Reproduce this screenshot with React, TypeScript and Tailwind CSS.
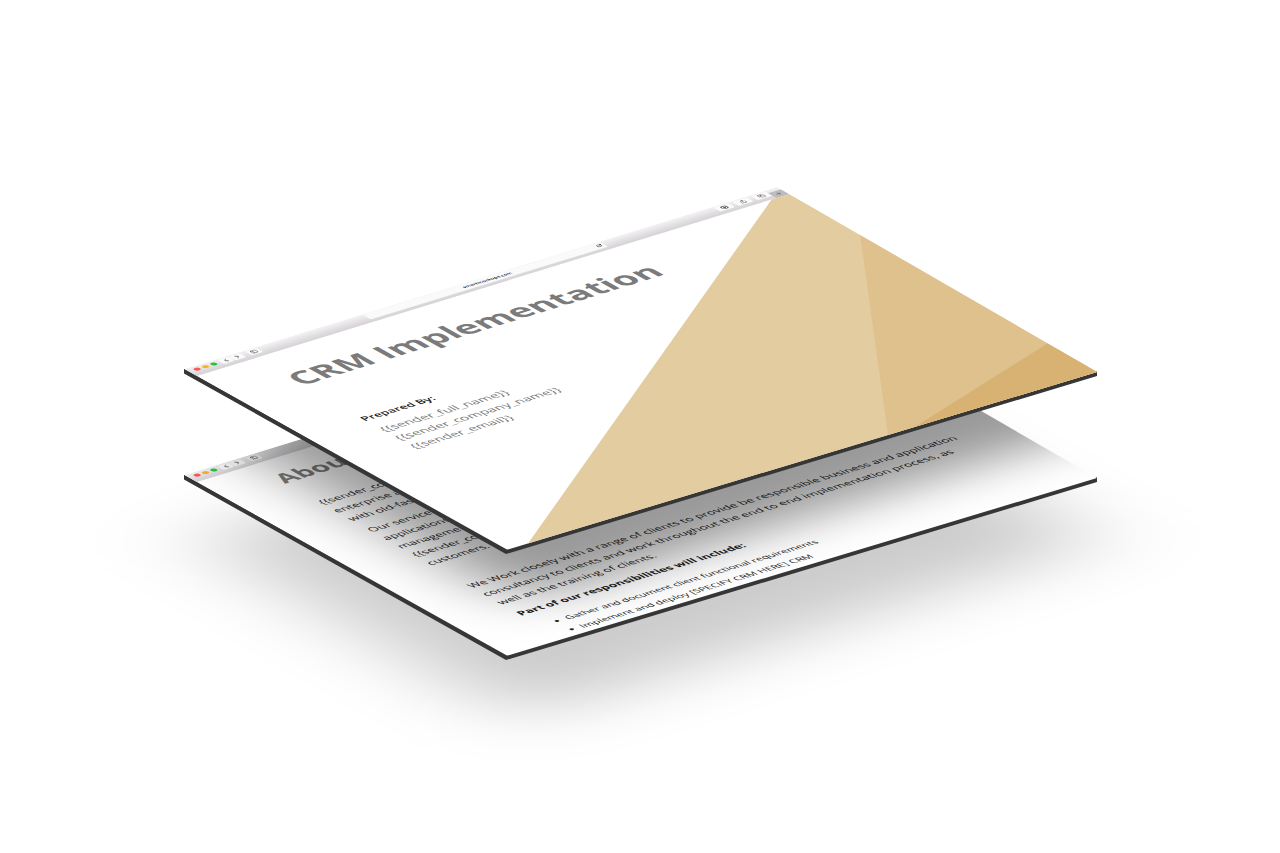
import type { ReactNode } from 'react';
import { ChevronLeft, ChevronRight, CircleArrowDown, Copy, PanelLeft, Plus, RotateCw, Share } from 'lucide-react';

const toolButton = 'flex h-5 w-6 items-center justify-center rounded-sm bg-[#fbfbfb] text-[#555]';
const wideButton = 'flex h-5 w-8 items-center justify-center rounded-sm bg-[#fbfbfb] text-[#555]';

function BrowserBar() {
  return (
    <header className="flex h-9 items-start border-b border-[#bdbabd] bg-linear-to-b from-[#f4f3f4] to-[#d6d2d7]">
      <div className="flex h-7 flex-1 items-center pl-3">
        <div className="flex gap-1.5">
          <span className="size-3 rounded-full bg-[#fc5753]" />
          <span className="size-3 rounded-full bg-[#f5b12f]" />
          <span className="size-3 rounded-full bg-[#2ac03f]" />
        </div>
        <div className="ml-2 flex gap-px">
          <button aria-label="Back" className={toolButton}><ChevronLeft size={18} /></button>
          <button aria-label="Forward" className={toolButton}><ChevronRight size={18} /></button>
        </div>
        <button aria-label="Sidebar" className={`${toolButton} ml-3`}><PanelLeft size={14} /></button>
      </div>
      <div className="mt-0.5 ml-4 flex h-6 w-[512px] items-center rounded-sm bg-[#fafafa] pl-6">
        <a href="#" className="flex-1 text-center text-[11px] font-semibold text-black">smartmockups.com</a>
        <button aria-label="Reload" className="mr-1"><RotateCw size={12} /></button>
      </div>
      <div className="flex h-7 flex-1 items-center justify-end gap-2">
        <button aria-label="Downloads" className={wideButton}><CircleArrowDown size={14} strokeWidth={4} /></button>
        <button aria-label="Share" className={wideButton}><Share size={14} /></button>
        <button aria-label="Tabs" className={wideButton}><Copy size={14} /></button>
      </div>
      <button aria-label="New tab" className="mt-3 flex h-6 w-7 items-center justify-center bg-[#bdbbbd] text-[#666]"><Plus size={14} /></button>
    </header>
  );
}

// The dark rim under the two front edges of a sheet
function SheetEdge() {
  return (
    <svg viewBox="0 0 913 190" className="absolute top-[369px] left-[184px] h-[190px] w-[913px]" aria-hidden="true">
      <path d="M0 -1 L322 179 L913 2 L913 7 L322 185 L0 4.500 Z" fill="#363636" />
    </svg>
  );
}

function Sheet({ children, shade }: { children: ReactNode; shade?: boolean }) {
  return (
    <div className="absolute top-0 left-0 h-[853px] w-[1280px] [clip-path:polygon(184px_369px,777px_187px,1097px_372px,506px_550px)]">
      <div className="relative h-[960px] w-[1280px] origin-top-left transform-[matrix(0.46328,-0.14219,0.34402,0.19231,184,369)] overflow-hidden bg-white">
        <BrowserBar />
        {children}
        {shade && <div className="absolute -top-72 -right-72 bottom-[180px] left-[150px] bg-black/40 blur-[80px]" />}
      </div>
    </div>
  );
}

function Cover() {
  return (
    <main className="relative h-[924px] pt-15 pl-[122px]">
      <svg viewBox="0 0 1280 924" className="absolute inset-0 size-full" aria-hidden="true">
        <path d="M1242 0 H1280 V924 H18 Z" fill="#e2cca0" />
        <path d="M1280 205 V924 H808 Z" fill="#dfc18d" />
        <path d="M1280 763 V924 H839 Z" fill="#d8b273" />
      </svg>
      <div className="relative">
        <h1 className="text-[74px] leading-[108px] font-bold text-[#7b7b7b]">CRM Implementation</h1>
        <h2 className="mt-[126px] text-[25px] leading-[44px] font-semibold text-[#222]">Prepared By:</h2>
        <div className="mt-3 text-[28px] leading-[44px] text-[#777]">
          <p>{'{{sender_full_name}}'}</p>
          <p>{'{{sender_company_name}}'}</p>
          <p>{'{{sender_email}}'}</p>
        </div>
      </div>
    </main>
  );
}

function About() {
  return (
    <main className="pt-9 pl-[119px] text-[25px] leading-[43px] text-[#222]">
      <h1 className="text-[54px] leading-[80px] font-bold text-[#7b7b7b]">About Us</h1>
      <p className="mt-[60px]">
        {'{{sender_company_name}}'} is a provider of<br />
        enterprise application services<br />
        with old-fashioned values.
      </p>
      <p className="mt-3.5">
        Our services include<br />
        applications, project<br />
        management and support.<br />
        {'{{sender_company_name}}'}<br />
        customers.
      </p>
      <p className="mt-19">
        We Work closely with a range of clients to provide be responsible business and application<br />
        consultancy to clients and work throughout the end to end implementation process, as<br />
        well as the training of clients.
      </p>
      <h2 className="mt-3.5 text-[25px] font-bold">Part of our responsibilities will include:</h2>
      <ul className="mt-5 list-disc pl-14 text-[22px]">
        <li>Gather and document client functional requirements</li>
        <li>Implement and deploy [SPECIFY CRM HERE] CRM</li>
      </ul>
    </main>
  );
}

export default function App() {
  return (
    <div className="flex min-h-screen items-center justify-center overflow-hidden bg-white font-['Open_Sans','Noto_Sans',sans-serif]">
      <div className="relative h-[853px] w-[1280px] shrink-0">
        <div className="absolute top-[106px] left-0">
          <div className="absolute top-0 left-0 h-[936px] w-[1280px] origin-top-left transform-[matrix(0.46328,-0.14219,0.34402,0.19231,184,369)]">
            <div className="absolute top-[230px] right-[170px] -bottom-[230px] -left-[140px] bg-black/20 blur-[100px]" />
          </div>
          <SheetEdge />
          <Sheet shade><About /></Sheet>
        </div>
        <div className="absolute top-0 left-0">
          <SheetEdge />
          <Sheet><Cover /></Sheet>
        </div>
      </div>
    </div>
  );
}
